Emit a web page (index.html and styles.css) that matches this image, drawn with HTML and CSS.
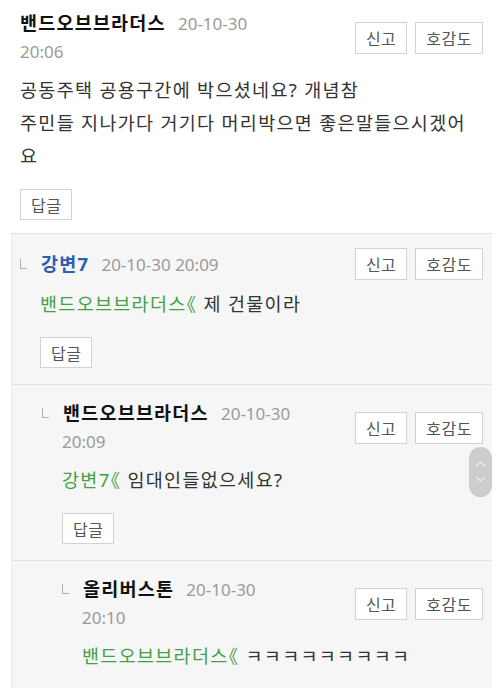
FILE: index.html
```html
<!DOCTYPE html>
<html lang="ko">
<head>
    <meta charset="UTF-8">
    <meta name="viewport" content="width=device-width, initial-scale=1.0">
    <title>댓글</title>
    <link rel="stylesheet" href="styles.css">
</head>
<body>

<div class="comments">
    <!-- 원댓글 -->
    <div class="comment">
        <div class="comment-head">
            <div class="comment-meta">
                <span class="nick">밴드오브브라더스</span>
                <span class="date"><span>20-10-30</span> <span>20:06</span></span>
            </div>
            <div class="comment-btns">
                <button class="btn">신고</button>
                <button class="btn">호감도</button>
            </div>
        </div>
        <p class="comment-text">공동주택 공용구간에 박으셨네요? 개념참<br>주민들 지나가다 거기다 머리박으면 좋은말들으시겠어요</p>
        <button class="btn btn-reply">답글</button>
    </div>

    <!-- 답글들 -->
    <div class="comment reply depth1">
        <div class="comment-head">
            <div class="comment-meta">
                <span class="reply-mark"></span><span class="nick nick-blue">강변7</span>
                <span class="date"><span>20-10-30</span> <span>20:09</span></span>
            </div>
            <div class="comment-btns">
                <button class="btn">신고</button>
                <button class="btn">호감도</button>
            </div>
        </div>
        <p class="comment-text"><span class="mention">밴드오브브라더스<span class="quote">《</span></span> 제 건물이라</p>
        <button class="btn btn-reply">답글</button>
    </div>

    <div class="comment reply depth2">
        <div class="comment-head">
            <div class="comment-meta">
                <span class="reply-mark"></span><span class="nick">밴드오브브라더스</span>
                <span class="date"><span>20-10-30</span> <span>20:09</span></span>
            </div>
            <div class="comment-btns">
                <button class="btn">신고</button>
                <button class="btn">호감도</button>
            </div>
        </div>
        <p class="comment-text"><span class="mention">강변7<span class="quote">《</span></span> 임대인들없으세요?</p>
        <button class="btn btn-reply">답글</button>
    </div>

    <div class="comment reply depth3">
        <div class="comment-head">
            <div class="comment-meta">
                <span class="reply-mark"></span><span class="nick">올리버스톤</span>
                <span class="date"><span>20-10-30</span> <span>20:10</span></span>
            </div>
            <div class="comment-btns">
                <button class="btn">신고</button>
                <button class="btn">호감도</button>
            </div>
        </div>
        <p class="comment-text"><span class="mention">밴드오브브라더스<span class="quote">《</span></span> ㅋㅋㅋㅋㅋㅋㅋㅋㅋ</p>
        <button class="btn btn-reply">답글</button>
    </div>
</div>

<!-- 위/아래 이동 버튼 -->
<div class="scroll-nav">
    <svg width="23" height="50" viewBox="0 0 23 50">
        <path d="M7 19 L11.5 15 L16 19" fill="none" stroke="#eee" stroke-width="1.3"/>
        <path d="M7 30 L11.5 34 L16 30" fill="none" stroke="#eee" stroke-width="1.3"/>
    </svg>
</div>

</body>
</html>
```

FILE: styles.css
```css
body {
    margin: 0;
    background: #fff;
    font-family: "Noto Sans", "Noto Sans CJK KR", sans-serif;
    color: #333;
}
.comments {
    padding: 9px 8px 0 11px;
}
.comment {
    padding: 0 9px 13px 9px;
}
.comment-head {
    display: flex;
    align-items: center;
    justify-content: space-between;
}
.comment-meta {
    flex: 1;
    line-height: 28px;
    margin-right: 62px;
}
.nick {
    font-size: 18.5px;
    font-weight: bold;
    letter-spacing: 1.2px;
    color: #111;
    margin-right: 8px;
}
.nick-blue {
    color: #2a5fb3;
}
.date {
    font-size: 17px;
    color: #9a9a9a;
}
.date span {
    white-space: nowrap;
}
.reply-mark {
    display: inline-block;
    width: 6px;
    height: 9px;
    margin-left: -20px;
    margin-right: 14px;
    border-left: 1px solid #b0b0b0;
    border-bottom: 1px solid #b0b0b0;
    vertical-align: 2px;
}
.comment-btns {
    display: flex;
    gap: 8px;
}
.btn {
    height: 32px;
    padding: 0 10px;
    border: 1px solid #d2d2d2;
    background: #fff;
    color: #555;
    font-family: "Noto Sans", "Noto Sans CJK KR", sans-serif;
    font-size: 16px;
    letter-spacing: 0.5px;
}
.comment-text {
    margin: 7px 0 0;
    font-size: 18.5px;
    letter-spacing: 1.3px;
    line-height: 33px;
    color: #333;
}
.mention {
    color: #44a047;
}
.quote {
    margin-left: -9px;
}
.btn-reply {
    height: 31px;
    margin-top: 17px;
}
/* 답글 박스 */
.reply {
    background: #f6f6f6;
    border-top: 1px solid #e2e2e2;
    border-left: 1px solid #ececec;
    padding-top: 14px;
    padding-bottom: 16px;
}
.depth1 {
    padding-left: 28px;
}
.depth2 {
    padding-left: 50px;
}
.depth3 {
    padding-left: 70px;
}
.scroll-nav {
    position: absolute;
    left: 469px;
    top: 447px;
    width: 23px;
    height: 50px;
    border-radius: 12px;
    background: #cdcdcd;
}
.scroll-nav svg {
    display: block;
}
```
